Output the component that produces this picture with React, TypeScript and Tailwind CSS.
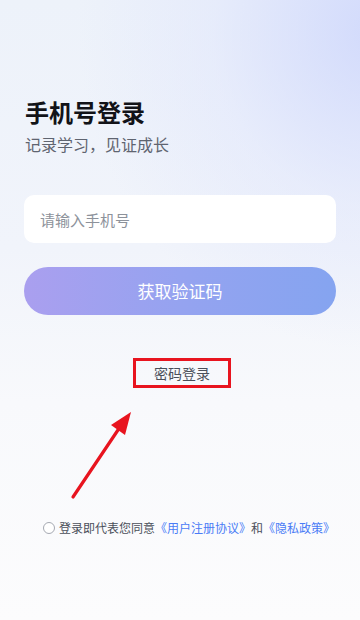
import React, { useState } from "react";

const font = "font-['Noto_Sans_CJK_SC','Noto_Sans',sans-serif]";

export default function App() {
  const [phone, setPhone] = useState("");
  const [agreed, setAgreed] = useState(false);

  return (
    <div
      className={`relative h-[620px] w-[360px] overflow-hidden bg-[#fbfbfd] ${font}`}
    >
      {/* Background glow */}
      <div className="absolute inset-0 bg-[linear-gradient(180deg,#edf2fa_0%,#f1f4fb_40%,#f8f9fc_65%,#fcfcfd_100%)]" />
      <div className="absolute inset-0 bg-[radial-gradient(ellipse_300px_320px_at_105%_5%,rgba(205,214,252,0.85),rgba(222,228,252,0.45)_55%,transparent_100%)]" />

      <div className="relative flex flex-col px-6">
        <h1 className="mt-[97px] pl-px text-[24px] leading-[30px] font-bold text-[#121318]">
          手机号登录
        </h1>
        <p className="mt-[6px] pl-px text-[16px] leading-[22px] text-[#5f6470]">
          记录学习，见证成长
        </p>

        <input
          value={phone}
          onChange={(e) => setPhone(e.target.value)}
          placeholder="请输入手机号"
          className="mt-[40px] h-12 w-full rounded-[10px] bg-white px-4 text-[15px] text-[#222] outline-none placeholder:text-[#8d929b]"
        />

        <button className="mt-6 h-12 w-full rounded-full bg-[linear-gradient(90deg,#aa9fef,#95a3f0_50%,#85a4f0)] text-[17px] text-white">
          获取验证码
        </button>

        <div className="mt-[43px] flex justify-center">
          <button className="ml-[4px] flex h-[30px] w-[98px] items-center justify-center border-[3px] border-[#e8141f] text-[14px] text-[#4a4f5a]">
            密码登录
          </button>
        </div>

        {/* Red annotation arrow */}
        <svg
          className="absolute left-0 top-[400px]"
          width="160"
          height="110"
          viewBox="0 400 160 110"
        >
          <line
            x1="73"
            y1="497"
            x2="120"
            y2="427"
            stroke="#e8141f"
            strokeWidth="3.2"
            strokeLinecap="round"
          />
          <polygon points="131,412 111,425 125,435" fill="#e8141f" />
        </svg>

        <div className="mt-[130px] flex items-center whitespace-nowrap pl-[19px] text-[12px] leading-5 text-[#4a4f5a]">
          <button
            onClick={() => setAgreed(!agreed)}
            className={`mr-[4px] h-3 w-3 shrink-0 rounded-full border ${
              agreed ? "border-[#4a7cf6] bg-[#4a7cf6]" : "border-[#a5a9b2] bg-white"
            }`}
          />
          <span>登录即代表您同意</span>
          <span className="text-[#4a7cf6]">《用户注册协议》</span>
          <span>和</span>
          <span className="text-[#4a7cf6]">《隐私政策》</span>
        </div>
      </div>
    </div>
  );
}
